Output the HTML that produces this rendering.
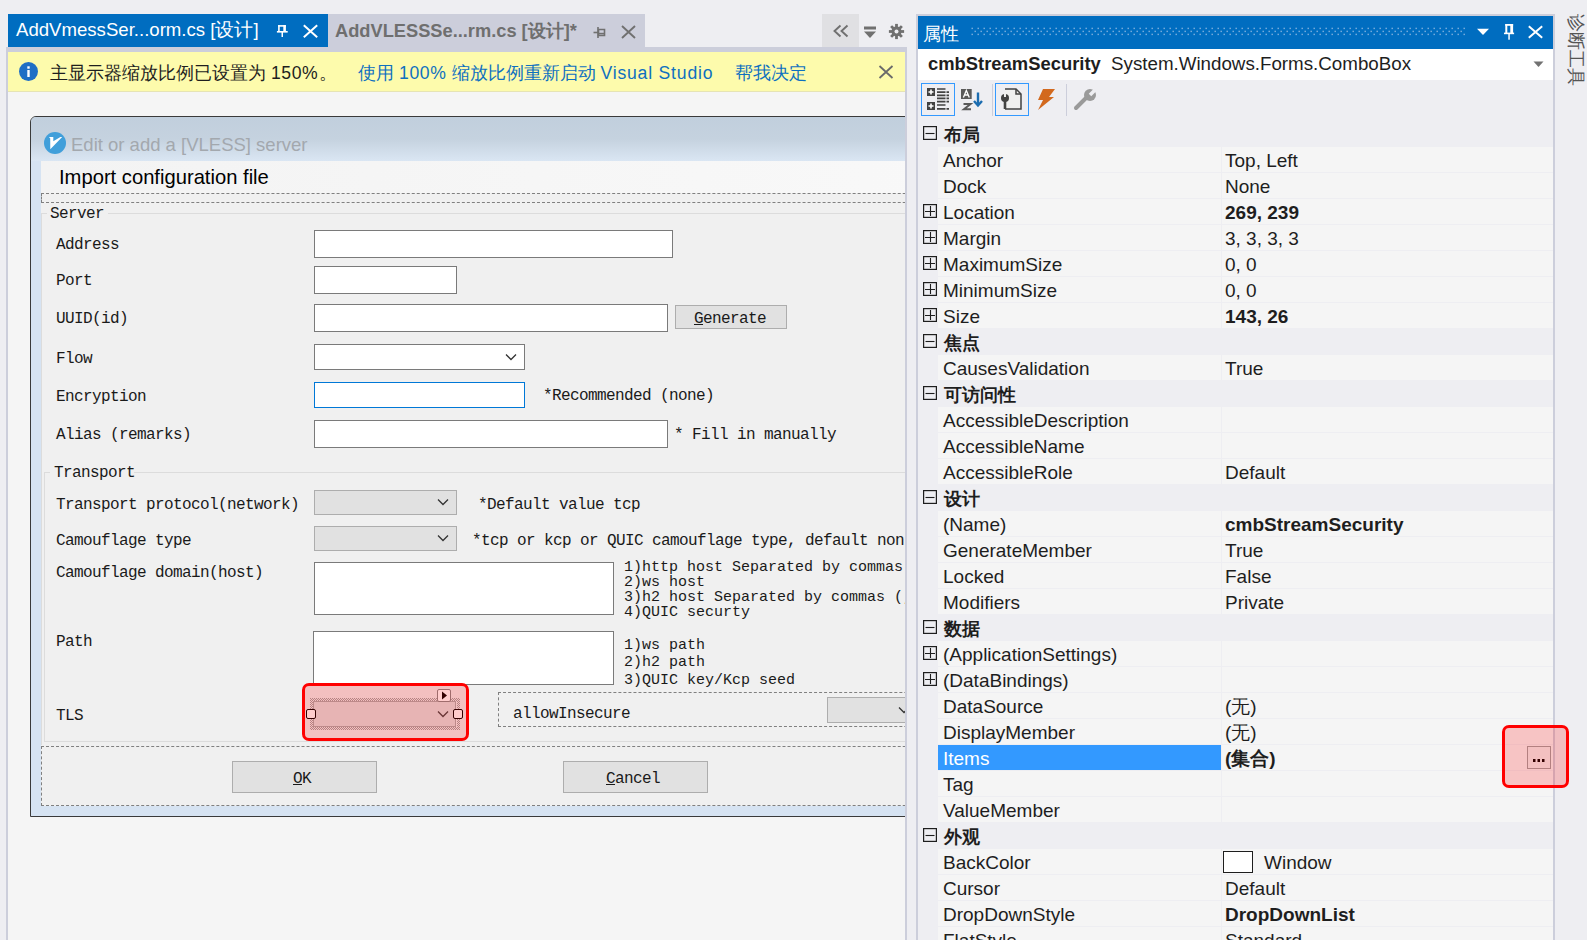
<!DOCTYPE html>
<html><head><meta charset="utf-8"><style>
html,body{margin:0;padding:0}
body{width:1587px;height:940px;overflow:hidden;position:relative;background:#EEEEF2;font-family:'Liberation Sans', sans-serif}
</style></head><body>
<div style="position:absolute;left:8px;top:14px;width:320px;height:33px;background:#006DC0"></div>
<div style="position:absolute;left:16px;top:21.26px;font-family:'Liberation Sans', sans-serif;font-size:18.6px;line-height:18.6px;color:#fff;font-weight:normal;white-space:nowrap;">AddVmessSer...orm.cs [设计]</div>
<svg style="position:absolute;left:276px;top:24px;" width="14" height="15" viewBox="0 0 14 15"><g fill="#fff"><rect x="2.1" y="1.1" width="1.6" height="6.5"/><rect x="7.3" y="1.1" width="2.6" height="6.5"/><rect x="2.1" y="1.1" width="7.8" height="1.6"/><rect x="0.9" y="7" width="10.8" height="1.6"/><rect x="5.5" y="8" width="1.5" height="5"/></g></svg>
<svg style="position:absolute;left:302px;top:24px;" width="17" height="15" viewBox="0 0 17 15"><path d="M1.8 1.3L15.2 13.3M15.2 1.3L1.8 13.3" stroke="#fff" stroke-width="2"/></svg>
<div style="position:absolute;left:328px;top:14px;width:317px;height:33px;background:#CCCEDB"></div>
<div style="position:absolute;left:335px;top:21.55px;font-family:'Liberation Sans', sans-serif;font-size:18.25px;line-height:18.25px;color:#6F6F6F;font-weight:bold;white-space:nowrap;">AddVLESSSe...rm.cs [设计]*</div>
<svg style="position:absolute;left:593px;top:26px;" width="14" height="13" viewBox="0 0 14 13"><path d="M5.5 3.5h6v6h-6z" fill="none" stroke="#707070" stroke-width="1.6"/><path d="M5.5 7.6h6" stroke="#707070" stroke-width="1.6"/><path d="M5 1v11" stroke="#707070" stroke-width="1.6"/><path d="M0.5 6.5h5" stroke="#707070" stroke-width="1.6"/></svg>
<svg style="position:absolute;left:620px;top:25px;" width="17" height="14" viewBox="0 0 17 14"><path d="M2 1L15 13M15 1L2 13" stroke="#707070" stroke-width="1.9"/></svg>
<div style="position:absolute;left:6px;top:47px;width:901px;height:5px;background:#CCCEDB"></div>
<div style="position:absolute;left:822px;top:14px;width:37px;height:33px;background:#E0E0E3"></div>
<svg style="position:absolute;left:832px;top:24px;" width="18" height="14" viewBox="0 0 18 14"><path d="M8.5 1.5L2.5 7l6 5.5M15.5 1.5L9.5 7l6 5.5" fill="none" stroke="#707070" stroke-width="1.9"/></svg>
<svg style="position:absolute;left:863px;top:25px;" width="14" height="14" viewBox="0 0 14 14"><path d="M1 1.5h12v3H1z" fill="#707070"/><path d="M1 6.5h12L7 13z" fill="#707070"/></svg>
<svg style="position:absolute;left:888px;top:23px;" width="17" height="17" viewBox="0 0 17 17"><g transform="translate(8.5 8.5)"><circle r="5" fill="#707070"/><circle r="2" fill="#EEEEF2"/><rect x="-1.4" y="-7.6" width="2.8" height="4" fill="#707070" transform="rotate(0)"/><rect x="-1.4" y="-7.6" width="2.8" height="4" fill="#707070" transform="rotate(45)"/><rect x="-1.4" y="-7.6" width="2.8" height="4" fill="#707070" transform="rotate(90)"/><rect x="-1.4" y="-7.6" width="2.8" height="4" fill="#707070" transform="rotate(135)"/><rect x="-1.4" y="-7.6" width="2.8" height="4" fill="#707070" transform="rotate(180)"/><rect x="-1.4" y="-7.6" width="2.8" height="4" fill="#707070" transform="rotate(225)"/><rect x="-1.4" y="-7.6" width="2.8" height="4" fill="#707070" transform="rotate(270)"/><rect x="-1.4" y="-7.6" width="2.8" height="4" fill="#707070" transform="rotate(315)"/></g></svg>
<div style="position:absolute;left:6px;top:52px;width:2px;height:888px;background:#CCCEDB"></div>
<div style="position:absolute;left:905px;top:47px;width:2px;height:893px;background:#CCCEDB"></div>
<div style="position:absolute;left:8px;top:92px;width:897px;height:848px;background:#F5F5F5"></div>
<div style="position:absolute;left:8px;top:52px;width:897px;height:40px;background:#FDFBAC"></div>
<div style="position:absolute;left:8px;top:91px;width:897px;height:1px;background:#E6E4B4"></div>
<svg style="position:absolute;left:19px;top:62px;" width="19" height="19" viewBox="0 0 19 19"><circle cx="9.5" cy="9.5" r="9.5" fill="#1F6FC5"/><rect x="8.3" y="8" width="2.4" height="7" fill="#fff"/><rect x="8.3" y="4.3" width="2.4" height="2.4" fill="#fff"/></svg>
<div style="position:absolute;left:50px;top:65.10px;font-family:'Liberation Sans', sans-serif;font-size:17.6px;line-height:17.6px;color:#1E1E1E;font-weight:normal;white-space:nowrap;">主显示器缩放比例已设置为 <span style='letter-spacing:0.6px'>150%</span><span style='margin-left:1px'>。</span></div>
<div style="position:absolute;left:358px;top:65.10px;font-family:'Liberation Sans', sans-serif;font-size:17.6px;line-height:17.6px;color:#0E70C0;font-weight:normal;white-space:nowrap;">使用 <span style='letter-spacing:0.7px'>100%</span> 缩放比例重新启动 <span style='letter-spacing:0.8px'>Visual Studio</span></div>
<div style="position:absolute;left:735px;top:65.10px;font-family:'Liberation Sans', sans-serif;font-size:17.6px;line-height:17.6px;color:#0E70C0;font-weight:normal;white-space:nowrap;">帮我决定</div>
<svg style="position:absolute;left:878px;top:65px;" width="16" height="14" viewBox="0 0 16 14"><path d="M1.5 1L14.5 13M14.5 1L1.5 13" stroke="#6A6A6A" stroke-width="1.8"/></svg>
<div style="position:absolute;left:8px;top:92px;width:897px;height:848px;overflow:hidden">
<div style="position:absolute;left:22px;top:24px;width:1000px;height:701px;background:#D6E3F2;border:1px solid #3A3A3A;border-top-left-radius:6px;box-sizing:border-box"></div>
<div style="position:absolute;left:23px;top:25px;width:998px;height:44px;background:linear-gradient(#C1CFDD 0%,#C5D2DF 50%,#DAE6F3 100%);border-top-left-radius:5px"></div>
<svg style="position:absolute;left:36px;top:40px;" width="22" height="22" viewBox="0 0 22 22"><circle cx="11" cy="11" r="11" fill="#419FDA"/><path d="M4.9 5.1L9.3 5.1L9.3 9.2L16.4 5.1L18.2 5.1L6.3 17.2L6.2 6.3Z" fill="#fff"/></svg>
<div style="position:absolute;left:63px;top:44.34px;font-family:'Liberation Sans', sans-serif;font-size:18.5px;line-height:18.5px;color:#A3A8AE;font-weight:normal;white-space:nowrap;">Edit or add a [VLESS] server</div>
<div style="position:absolute;left:33px;top:69px;width:990px;height:645px;background:#F0F0F0"></div>
<div style="position:absolute;left:33px;top:69px;width:990px;height:32px;background:linear-gradient(90deg,#F3F3F3,#F9F9F9)"></div>
<div style="position:absolute;left:51px;top:75.30px;font-family:'Liberation Sans', sans-serif;font-size:20.2px;line-height:20.2px;color:#000;font-weight:normal;white-space:nowrap;">Import configuration file</div>
<div style="position:absolute;left:33px;top:101px;width:990px;height:10px;border:1px dashed #808080;box-sizing:border-box"></div>
<div style="position:absolute;left:33px;top:121px;width:990px;height:1px;background:#DCDCDC"></div>
<div style="position:absolute;left:33px;top:121px;width:1px;height:532px;background:#DCDCDC"></div>
<div style="position:absolute;left:39px;top:113px;width:61px;height:16px;background:#F0F0F0"></div>
<div style="position:absolute;left:42px;top:113.74px;font-family:'Liberation Mono', monospace;font-size:16px;line-height:16px;color:#1a1a1a;font-weight:normal;white-space:nowrap;letter-spacing:-0.6px">Server</div>
<div style="position:absolute;left:48px;top:144.74px;font-family:'Liberation Mono', monospace;font-size:16px;line-height:16px;color:#1a1a1a;font-weight:normal;white-space:nowrap;letter-spacing:-0.6px">Address</div>
<div style="position:absolute;left:306px;top:138px;width:359px;height:28px;background:#fff;border:1px solid #7A7A7A;box-sizing:border-box"></div>
<div style="position:absolute;left:48px;top:180.74px;font-family:'Liberation Mono', monospace;font-size:16px;line-height:16px;color:#1a1a1a;font-weight:normal;white-space:nowrap;letter-spacing:-0.6px">Port</div>
<div style="position:absolute;left:306px;top:174px;width:143px;height:28px;background:#fff;border:1px solid #7A7A7A;box-sizing:border-box"></div>
<div style="position:absolute;left:48px;top:218.74px;font-family:'Liberation Mono', monospace;font-size:16px;line-height:16px;color:#1a1a1a;font-weight:normal;white-space:nowrap;letter-spacing:-0.6px">UUID(id)</div>
<div style="position:absolute;left:306px;top:212px;width:354px;height:28px;background:#fff;border:1px solid #7A7A7A;box-sizing:border-box"></div>
<div style="position:absolute;left:667px;top:213px;width:112px;height:24px;background:#E1E1E1;border:1px solid #ADADAD;box-sizing:border-box"></div>
<div style="position:absolute;left:686px;top:218.74px;font-family:'Liberation Mono', monospace;font-size:16px;line-height:16px;color:#1a1a1a;font-weight:normal;white-space:nowrap;letter-spacing:-0.6px"><u>G</u>enerate</div>
<div style="position:absolute;left:48px;top:258.74px;font-family:'Liberation Mono', monospace;font-size:16px;line-height:16px;color:#1a1a1a;font-weight:normal;white-space:nowrap;letter-spacing:-0.6px">Flow</div>
<div style="position:absolute;left:306px;top:252px;width:211px;height:26px;background:#fff;border:1px solid #7A7A7A;box-sizing:border-box"></div>
<svg style="position:absolute;left:497px;top:261px;" width="12" height="8" viewBox="0 0 12 8"><path d="M1 1.5l5 5 5-5" fill="none" stroke="#333" stroke-width="1.3"/></svg>
<div style="position:absolute;left:48px;top:296.74px;font-family:'Liberation Mono', monospace;font-size:16px;line-height:16px;color:#1a1a1a;font-weight:normal;white-space:nowrap;letter-spacing:-0.6px">Encryption</div>
<div style="position:absolute;left:306px;top:290px;width:211px;height:26px;background:#fff;border:1px solid #0078D7;box-sizing:border-box"></div>
<div style="position:absolute;left:535px;top:295.74px;font-family:'Liberation Mono', monospace;font-size:16px;line-height:16px;color:#1a1a1a;font-weight:normal;white-space:nowrap;letter-spacing:-0.6px">*Recommended (none)</div>
<div style="position:absolute;left:48px;top:334.74px;font-family:'Liberation Mono', monospace;font-size:16px;line-height:16px;color:#1a1a1a;font-weight:normal;white-space:nowrap;letter-spacing:-0.6px">Alias (remarks)</div>
<div style="position:absolute;left:306px;top:328px;width:354px;height:28px;background:#fff;border:1px solid #7A7A7A;box-sizing:border-box"></div>
<div style="position:absolute;left:666px;top:334.74px;font-family:'Liberation Mono', monospace;font-size:16px;line-height:16px;color:#1a1a1a;font-weight:normal;white-space:nowrap;letter-spacing:-0.6px">* Fill in manually</div>
<div style="position:absolute;left:36px;top:380px;width:990px;height:1px;background:#DCDCDC"></div>
<div style="position:absolute;left:36px;top:380px;width:1px;height:270px;background:#DCDCDC"></div>
<div style="position:absolute;left:36px;top:649px;width:990px;height:1px;background:#DCDCDC"></div>
<div style="position:absolute;left:42px;top:372px;width:84px;height:16px;background:#F0F0F0"></div>
<div style="position:absolute;left:46px;top:372.74px;font-family:'Liberation Mono', monospace;font-size:16px;line-height:16px;color:#1a1a1a;font-weight:normal;white-space:nowrap;letter-spacing:-0.6px">Transport</div>
<div style="position:absolute;left:48px;top:404.74px;font-family:'Liberation Mono', monospace;font-size:16px;line-height:16px;color:#1a1a1a;font-weight:normal;white-space:nowrap;letter-spacing:-0.6px">Transport protocol(network)</div>
<div style="position:absolute;left:306px;top:398px;width:143px;height:25px;background:#E1E1E1;border:1px solid #ADADAD;box-sizing:border-box"></div>
<svg style="position:absolute;left:429px;top:406px;" width="12" height="8" viewBox="0 0 12 8"><path d="M1 1.5l5 5 5-5" fill="none" stroke="#333" stroke-width="1.3"/></svg>
<div style="position:absolute;left:470px;top:404.74px;font-family:'Liberation Mono', monospace;font-size:16px;line-height:16px;color:#1a1a1a;font-weight:normal;white-space:nowrap;letter-spacing:-0.6px">*Default value tcp</div>
<div style="position:absolute;left:48px;top:440.74px;font-family:'Liberation Mono', monospace;font-size:16px;line-height:16px;color:#1a1a1a;font-weight:normal;white-space:nowrap;letter-spacing:-0.6px">Camouflage type</div>
<div style="position:absolute;left:306px;top:434px;width:143px;height:25px;background:#E1E1E1;border:1px solid #ADADAD;box-sizing:border-box"></div>
<svg style="position:absolute;left:429px;top:442px;" width="12" height="8" viewBox="0 0 12 8"><path d="M1 1.5l5 5 5-5" fill="none" stroke="#333" stroke-width="1.3"/></svg>
<div style="position:absolute;left:464px;top:440.74px;font-family:'Liberation Mono', monospace;font-size:16px;line-height:16px;color:#1a1a1a;font-weight:normal;white-space:nowrap;letter-spacing:-0.6px">*tcp or kcp or QUIC camouflage type, default non</div>
<div style="position:absolute;left:48px;top:472.74px;font-family:'Liberation Mono', monospace;font-size:16px;line-height:16px;color:#1a1a1a;font-weight:normal;white-space:nowrap;letter-spacing:-0.6px">Camouflage domain(host)</div>
<div style="position:absolute;left:306px;top:470px;width:300px;height:53px;background:#fff;border:1px solid #7A7A7A;box-sizing:border-box"></div>
<div style="position:absolute;left:616px;top:467.50px;font-family:'Liberation Mono', monospace;font-size:15px;line-height:15px;color:#1a1a1a;font-weight:normal;white-space:nowrap;letter-spacing:0px">1)http host Separated by commas (,)</div>
<div style="position:absolute;left:616px;top:482.50px;font-family:'Liberation Mono', monospace;font-size:15px;line-height:15px;color:#1a1a1a;font-weight:normal;white-space:nowrap;letter-spacing:0px">2)ws host</div>
<div style="position:absolute;left:616px;top:497.50px;font-family:'Liberation Mono', monospace;font-size:15px;line-height:15px;color:#1a1a1a;font-weight:normal;white-space:nowrap;letter-spacing:0px">3)h2 host Separated by commas (,)</div>
<div style="position:absolute;left:616px;top:512.50px;font-family:'Liberation Mono', monospace;font-size:15px;line-height:15px;color:#1a1a1a;font-weight:normal;white-space:nowrap;letter-spacing:0px">4)QUIC securty</div>
<div style="position:absolute;left:48px;top:541.74px;font-family:'Liberation Mono', monospace;font-size:16px;line-height:16px;color:#1a1a1a;font-weight:normal;white-space:nowrap;letter-spacing:-0.6px">Path</div>
<div style="position:absolute;left:305px;top:539px;width:301px;height:54px;background:#fff;border:1px solid #7A7A7A;box-sizing:border-box"></div>
<div style="position:absolute;left:616px;top:545.50px;font-family:'Liberation Mono', monospace;font-size:15px;line-height:15px;color:#1a1a1a;font-weight:normal;white-space:nowrap;letter-spacing:0px">1)ws path</div>
<div style="position:absolute;left:616px;top:562.50px;font-family:'Liberation Mono', monospace;font-size:15px;line-height:15px;color:#1a1a1a;font-weight:normal;white-space:nowrap;letter-spacing:0px">2)h2 path</div>
<div style="position:absolute;left:616px;top:580.50px;font-family:'Liberation Mono', monospace;font-size:15px;line-height:15px;color:#1a1a1a;font-weight:normal;white-space:nowrap;letter-spacing:0px">3)QUIC key/Kcp seed</div>
<div style="position:absolute;left:48px;top:615.74px;font-family:'Liberation Mono', monospace;font-size:16px;line-height:16px;color:#1a1a1a;font-weight:normal;white-space:nowrap;letter-spacing:-0.6px">TLS</div>
<div style="position:absolute;left:305px;top:609px;width:143px;height:26px;background:#E1E1E1;border:1px solid #ADADAD;box-sizing:border-box"></div>
<svg style="position:absolute;left:302px;top:606px;" width="150" height="32" viewBox="0 0 150 32"><defs><pattern id="hp" width="2" height="2" patternUnits="userSpaceOnUse"><rect x="0" y="0" width="1" height="1" fill="#555"/><rect x="1" y="1" width="1" height="1" fill="#555"/></pattern></defs><path d="M0 0h150v32H0z M3 3v26h144V3z" fill="url(#hp)" fill-rule="evenodd" opacity="0.5"/></svg>
<svg style="position:absolute;left:429px;top:618px;" width="12" height="8" viewBox="0 0 12 8"><path d="M1 1.5l5 5 5-5" fill="none" stroke="#444" stroke-width="1.3"/></svg>
<div style="position:absolute;left:298px;top:617px;width:10px;height:10px;background:#fff;border:1px solid #000;box-sizing:border-box;border-radius:2px"></div>
<div style="position:absolute;left:445px;top:617px;width:10px;height:10px;background:#fff;border:1px solid #000;box-sizing:border-box;border-radius:2px"></div>
<div style="position:absolute;left:429px;top:597px;width:14px;height:13px;background:#fff;border:1px solid #888;box-sizing:border-box;border-radius:2px"></div>
<svg style="position:absolute;left:432px;top:599px;" width="8" height="9" viewBox="0 0 8 9"><path d="M2 0.5l5 4-5 4z" fill="#000"/></svg>
<div style="position:absolute;left:294px;top:591px;width:167px;height:58px;border:3px solid #FF0000;border-radius:7px;background:rgba(255,0,0,0.2);box-sizing:border-box"></div>
<div style="position:absolute;left:490px;top:600px;width:600px;height:35px;border:1px dashed #808080;box-sizing:border-box"></div>
<div style="position:absolute;left:505px;top:613.74px;font-family:'Liberation Mono', monospace;font-size:16px;line-height:16px;color:#1a1a1a;font-weight:normal;white-space:nowrap;letter-spacing:-0.6px">allowInsecure</div>
<div style="position:absolute;left:819px;top:605px;width:143px;height:26px;background:#E1E1E1;border:1px solid #ADADAD;box-sizing:border-box"></div>
<svg style="position:absolute;left:890px;top:614px;" width="12" height="8" viewBox="0 0 12 8"><path d="M1 1.5l5 5 5-5" fill="none" stroke="#333" stroke-width="1.3"/></svg>
<div style="position:absolute;left:33px;top:654px;width:990px;height:60px;border:1px dashed #808080;box-sizing:border-box"></div>
<div style="position:absolute;left:224px;top:669px;width:145px;height:32px;background:#E1E1E1;border:1px solid #ADADAD;box-sizing:border-box"></div>
<div style="position:absolute;left:285px;top:678.74px;font-family:'Liberation Mono', monospace;font-size:16px;line-height:16px;color:#1a1a1a;font-weight:normal;white-space:nowrap;letter-spacing:-0.6px"><u>O</u>K</div>
<div style="position:absolute;left:555px;top:669px;width:145px;height:32px;background:#E1E1E1;border:1px solid #ADADAD;box-sizing:border-box"></div>
<div style="position:absolute;left:598px;top:678.74px;font-family:'Liberation Mono', monospace;font-size:16px;line-height:16px;color:#1a1a1a;font-weight:normal;white-space:nowrap;letter-spacing:-0.6px"><u>C</u>ancel</div>
</div>
<div style="position:absolute;left:916px;top:14px;width:639px;height:926px;background:#EEEEF2;border-left:2px solid #CCCEDB;border-right:2px solid #CCCEDB;border-top:2px solid #CCCEDB;box-sizing:border-box"></div>
<div style="position:absolute;left:918px;top:16px;width:635px;height:33px;background:#006DC0"></div>
<div style="position:absolute;left:923px;top:24.76px;font-family:'Liberation Sans', sans-serif;font-size:18px;line-height:18px;color:#fff;font-weight:normal;white-space:nowrap;">属性</div>
<svg style="position:absolute;left:971px;top:27px;" width="495" height="9" viewBox="0 0 495 9"><defs><pattern id="gp" width="6" height="6" patternUnits="userSpaceOnUse"><rect x="0.5" y="0.7" width="1.4" height="1.4" fill="#7FB0DE"/><rect x="3.5" y="3.7" width="1.4" height="1.4" fill="#7FB0DE"/></pattern></defs><rect width="495" height="9" fill="url(#gp)"/></svg>
<svg style="position:absolute;left:1476px;top:28px;" width="14" height="8" viewBox="0 0 14 8"><path d="M1 0.8h12L7 7z" fill="#fff"/></svg>
<svg style="position:absolute;left:1503px;top:23px;" width="13" height="18" viewBox="0 0 13 18"><g fill="#fff"><rect x="2.3" y="1" width="2" height="9"/><rect x="7.3" y="1" width="2.8" height="9"/><rect x="2.3" y="1" width="7.8" height="1.8"/><rect x="1" y="9.6" width="10.1" height="1.6"/><rect x="5.3" y="10.5" width="1.5" height="6.2"/></g></svg>
<svg style="position:absolute;left:1527px;top:25px;" width="17" height="14" viewBox="0 0 17 14"><path d="M1.8 1.2L15.2 12.8M15.2 1.2L1.8 12.8" stroke="#fff" stroke-width="2"/></svg>
<div style="position:absolute;left:918px;top:49px;width:635px;height:31px;background:#fff"></div>
<div style="position:absolute;left:928px;top:55.42px;font-family:'Liberation Sans', sans-serif;font-size:18.4px;line-height:18.4px;color:#1E1E1E;font-weight:bold;white-space:nowrap;">cmbStreamSecurity</div>
<div style="position:absolute;left:1111px;top:55.13px;font-family:'Liberation Sans', sans-serif;font-size:18.75px;line-height:18.75px;color:#1E1E1E;font-weight:normal;white-space:nowrap;">System.Windows.Forms.ComboBox</div>
<svg style="position:absolute;left:1533px;top:61px;" width="11" height="7" viewBox="0 0 11 7"><path d="M0.5 0.5h10L5.5 6z" fill="#717171"/></svg>
<div style="position:absolute;left:921px;top:83px;width:34px;height:33px;border:1px solid #3399FF;box-sizing:border-box"></div>
<svg style="position:absolute;left:927px;top:88px;" width="23" height="23" viewBox="0 0 23 23"><rect x="0" y="0" width="8" height="8" fill="#424242"/><path d="M1.5 4h5M4 1.5v5" stroke="#fff" stroke-width="1.6"/><rect x="0" y="14" width="8" height="8" fill="#424242"/><path d="M1.5 18h5M4 15.5v5" stroke="#fff" stroke-width="1.6"/><path d="M10 1h8.5M10 4.1h8.5M10 7.3h8.5M10 10.4h8.5M10 13.6h8.5M10 17h8.5M10 20.8h8.5" stroke="#424242" stroke-width="1.7"/><path d="M19.5 4.1h2.5M19.5 7.3h2.5M19.5 10.4h2.5M19.5 13.6h2.5M19.5 20.8h2.5" stroke="#424242" stroke-width="1.7"/></svg>
<svg style="position:absolute;left:960px;top:88px;" width="24" height="24" viewBox="0 0 24 24"><rect x="1" y="1" width="10.7" height="10" fill="#5A5A5A"/><path d="M3.4 9.5L6.35 2.5 9.3 9.5M4.5 7h3.7" fill="none" stroke="#fff" stroke-width="1.3"/><path d="M3.5 16h7L4 21.2h7" fill="none" stroke="#5A5A5A" stroke-width="2"/><path d="M18 4.5v12" stroke="#1B6CB0" stroke-width="2.4"/><path d="M14 13l4 4.5 4-4.5" fill="none" stroke="#1B6CB0" stroke-width="2.4"/></svg>
<div style="position:absolute;left:992px;top:84px;width:1px;height:32px;background:#CCCEDB"></div>
<div style="position:absolute;left:995px;top:83px;width:34px;height:33px;border:1px solid #3399FF;box-sizing:border-box"></div>
<svg style="position:absolute;left:1000px;top:87px;" width="23" height="25" viewBox="0 0 23 25"><path d="M5 2h11l5 5v15H5" fill="#EFEFEF" stroke="#424242" stroke-width="1.5"/><path d="M16 2v5h5" fill="none" stroke="#424242" stroke-width="1.5"/><circle cx="5" cy="11" r="4" fill="#424242"/><rect x="3.7" y="12" width="2.6" height="10" fill="#424242"/><rect x="4" y="6" width="2" height="4" fill="#EFEFEF"/></svg>
<svg style="position:absolute;left:1035px;top:88px;" width="22" height="23" viewBox="0 0 22 23"><path d="M8 1h12l-6 8h5L3 22l5-10H3z" fill="#D2691E"/></svg>
<div style="position:absolute;left:1066px;top:84px;width:1px;height:32px;background:#CCCEDB"></div>
<svg style="position:absolute;left:1073px;top:87px;" width="25" height="25" viewBox="0 0 25 25"><path d="M3 21L13 11" stroke="#9A9A9A" stroke-width="4" stroke-linecap="round"/><circle cx="17" cy="8" r="6" fill="#9A9A9A"/><path d="M17 8l5-5" stroke="#EEEEF2" stroke-width="3.5"/></svg>
<div style="position:absolute;left:0;top:0;width:1553px;height:940px;overflow:hidden">
<svg style="position:absolute;left:923px;top:126px;" width="14" height="14" viewBox="0 0 14 14"><rect x="0.6" y="0.6" width="12.8" height="12.8" fill="none" stroke="#1E1E1E" stroke-width="1.2"/><path d="M2.5 7.5h9" stroke="#1E1E1E" stroke-width="1.1"/></svg>
<div style="position:absolute;left:944px;top:125.76px;font-family:'Liberation Sans', sans-serif;font-size:18px;line-height:18px;color:#1E1E1E;font-weight:bold;white-space:nowrap;">布局</div>
<div style="position:absolute;left:938px;top:147px;width:283px;height:25px;background:#F5F5F5"></div>
<div style="position:absolute;left:1222px;top:147px;width:331px;height:25px;background:#F5F5F5"></div>
<div style="position:absolute;left:943px;top:150.92px;font-family:'Liberation Sans', sans-serif;font-size:19px;line-height:19px;color:#1E1E1E;font-weight:normal;white-space:nowrap;">Anchor</div>
<div style="position:absolute;left:1225px;top:150.92px;font-family:'Liberation Sans', sans-serif;font-size:19px;line-height:19px;color:#1E1E1E;font-weight:normal;white-space:nowrap;">Top, Left</div>
<div style="position:absolute;left:938px;top:173px;width:283px;height:25px;background:#F5F5F5"></div>
<div style="position:absolute;left:1222px;top:173px;width:331px;height:25px;background:#F5F5F5"></div>
<div style="position:absolute;left:943px;top:176.92px;font-family:'Liberation Sans', sans-serif;font-size:19px;line-height:19px;color:#1E1E1E;font-weight:normal;white-space:nowrap;">Dock</div>
<div style="position:absolute;left:1225px;top:176.92px;font-family:'Liberation Sans', sans-serif;font-size:19px;line-height:19px;color:#1E1E1E;font-weight:normal;white-space:nowrap;">None</div>
<div style="position:absolute;left:938px;top:199px;width:283px;height:25px;background:#F5F5F5"></div>
<div style="position:absolute;left:1222px;top:199px;width:331px;height:25px;background:#F5F5F5"></div>
<svg style="position:absolute;left:923px;top:204px;" width="14" height="14" viewBox="0 0 14 14"><rect x="0.6" y="0.6" width="12.8" height="12.8" fill="none" stroke="#1E1E1E" stroke-width="1.2"/><path d="M2 7.5h10M7.5 2v10" stroke="#1E1E1E" stroke-width="1.1"/></svg>
<div style="position:absolute;left:943px;top:202.92px;font-family:'Liberation Sans', sans-serif;font-size:19px;line-height:19px;color:#1E1E1E;font-weight:normal;white-space:nowrap;">Location</div>
<div style="position:absolute;left:1225px;top:202.92px;font-family:'Liberation Sans', sans-serif;font-size:19px;line-height:19px;color:#1E1E1E;font-weight:bold;white-space:nowrap;">269, 239</div>
<div style="position:absolute;left:938px;top:225px;width:283px;height:25px;background:#F5F5F5"></div>
<div style="position:absolute;left:1222px;top:225px;width:331px;height:25px;background:#F5F5F5"></div>
<svg style="position:absolute;left:923px;top:230px;" width="14" height="14" viewBox="0 0 14 14"><rect x="0.6" y="0.6" width="12.8" height="12.8" fill="none" stroke="#1E1E1E" stroke-width="1.2"/><path d="M2 7.5h10M7.5 2v10" stroke="#1E1E1E" stroke-width="1.1"/></svg>
<div style="position:absolute;left:943px;top:228.92px;font-family:'Liberation Sans', sans-serif;font-size:19px;line-height:19px;color:#1E1E1E;font-weight:normal;white-space:nowrap;">Margin</div>
<div style="position:absolute;left:1225px;top:228.92px;font-family:'Liberation Sans', sans-serif;font-size:19px;line-height:19px;color:#1E1E1E;font-weight:normal;white-space:nowrap;">3, 3, 3, 3</div>
<div style="position:absolute;left:938px;top:251px;width:283px;height:25px;background:#F5F5F5"></div>
<div style="position:absolute;left:1222px;top:251px;width:331px;height:25px;background:#F5F5F5"></div>
<svg style="position:absolute;left:923px;top:256px;" width="14" height="14" viewBox="0 0 14 14"><rect x="0.6" y="0.6" width="12.8" height="12.8" fill="none" stroke="#1E1E1E" stroke-width="1.2"/><path d="M2 7.5h10M7.5 2v10" stroke="#1E1E1E" stroke-width="1.1"/></svg>
<div style="position:absolute;left:943px;top:254.92px;font-family:'Liberation Sans', sans-serif;font-size:19px;line-height:19px;color:#1E1E1E;font-weight:normal;white-space:nowrap;">MaximumSize</div>
<div style="position:absolute;left:1225px;top:254.92px;font-family:'Liberation Sans', sans-serif;font-size:19px;line-height:19px;color:#1E1E1E;font-weight:normal;white-space:nowrap;">0, 0</div>
<div style="position:absolute;left:938px;top:277px;width:283px;height:25px;background:#F5F5F5"></div>
<div style="position:absolute;left:1222px;top:277px;width:331px;height:25px;background:#F5F5F5"></div>
<svg style="position:absolute;left:923px;top:282px;" width="14" height="14" viewBox="0 0 14 14"><rect x="0.6" y="0.6" width="12.8" height="12.8" fill="none" stroke="#1E1E1E" stroke-width="1.2"/><path d="M2 7.5h10M7.5 2v10" stroke="#1E1E1E" stroke-width="1.1"/></svg>
<div style="position:absolute;left:943px;top:280.92px;font-family:'Liberation Sans', sans-serif;font-size:19px;line-height:19px;color:#1E1E1E;font-weight:normal;white-space:nowrap;">MinimumSize</div>
<div style="position:absolute;left:1225px;top:280.92px;font-family:'Liberation Sans', sans-serif;font-size:19px;line-height:19px;color:#1E1E1E;font-weight:normal;white-space:nowrap;">0, 0</div>
<div style="position:absolute;left:938px;top:303px;width:283px;height:25px;background:#F5F5F5"></div>
<div style="position:absolute;left:1222px;top:303px;width:331px;height:25px;background:#F5F5F5"></div>
<svg style="position:absolute;left:923px;top:308px;" width="14" height="14" viewBox="0 0 14 14"><rect x="0.6" y="0.6" width="12.8" height="12.8" fill="none" stroke="#1E1E1E" stroke-width="1.2"/><path d="M2 7.5h10M7.5 2v10" stroke="#1E1E1E" stroke-width="1.1"/></svg>
<div style="position:absolute;left:943px;top:306.92px;font-family:'Liberation Sans', sans-serif;font-size:19px;line-height:19px;color:#1E1E1E;font-weight:normal;white-space:nowrap;">Size</div>
<div style="position:absolute;left:1225px;top:306.92px;font-family:'Liberation Sans', sans-serif;font-size:19px;line-height:19px;color:#1E1E1E;font-weight:bold;white-space:nowrap;">143, 26</div>
<svg style="position:absolute;left:923px;top:334px;" width="14" height="14" viewBox="0 0 14 14"><rect x="0.6" y="0.6" width="12.8" height="12.8" fill="none" stroke="#1E1E1E" stroke-width="1.2"/><path d="M2.5 7.5h9" stroke="#1E1E1E" stroke-width="1.1"/></svg>
<div style="position:absolute;left:944px;top:333.76px;font-family:'Liberation Sans', sans-serif;font-size:18px;line-height:18px;color:#1E1E1E;font-weight:bold;white-space:nowrap;">焦点</div>
<div style="position:absolute;left:938px;top:355px;width:283px;height:25px;background:#F5F5F5"></div>
<div style="position:absolute;left:1222px;top:355px;width:331px;height:25px;background:#F5F5F5"></div>
<div style="position:absolute;left:943px;top:358.92px;font-family:'Liberation Sans', sans-serif;font-size:19px;line-height:19px;color:#1E1E1E;font-weight:normal;white-space:nowrap;">CausesValidation</div>
<div style="position:absolute;left:1225px;top:358.92px;font-family:'Liberation Sans', sans-serif;font-size:19px;line-height:19px;color:#1E1E1E;font-weight:normal;white-space:nowrap;">True</div>
<svg style="position:absolute;left:923px;top:386px;" width="14" height="14" viewBox="0 0 14 14"><rect x="0.6" y="0.6" width="12.8" height="12.8" fill="none" stroke="#1E1E1E" stroke-width="1.2"/><path d="M2.5 7.5h9" stroke="#1E1E1E" stroke-width="1.1"/></svg>
<div style="position:absolute;left:944px;top:385.76px;font-family:'Liberation Sans', sans-serif;font-size:18px;line-height:18px;color:#1E1E1E;font-weight:bold;white-space:nowrap;">可访问性</div>
<div style="position:absolute;left:938px;top:407px;width:283px;height:25px;background:#F5F5F5"></div>
<div style="position:absolute;left:1222px;top:407px;width:331px;height:25px;background:#F5F5F5"></div>
<div style="position:absolute;left:943px;top:410.92px;font-family:'Liberation Sans', sans-serif;font-size:19px;line-height:19px;color:#1E1E1E;font-weight:normal;white-space:nowrap;">AccessibleDescription</div>
<div style="position:absolute;left:938px;top:433px;width:283px;height:25px;background:#F5F5F5"></div>
<div style="position:absolute;left:1222px;top:433px;width:331px;height:25px;background:#F5F5F5"></div>
<div style="position:absolute;left:943px;top:436.92px;font-family:'Liberation Sans', sans-serif;font-size:19px;line-height:19px;color:#1E1E1E;font-weight:normal;white-space:nowrap;">AccessibleName</div>
<div style="position:absolute;left:938px;top:459px;width:283px;height:25px;background:#F5F5F5"></div>
<div style="position:absolute;left:1222px;top:459px;width:331px;height:25px;background:#F5F5F5"></div>
<div style="position:absolute;left:943px;top:462.92px;font-family:'Liberation Sans', sans-serif;font-size:19px;line-height:19px;color:#1E1E1E;font-weight:normal;white-space:nowrap;">AccessibleRole</div>
<div style="position:absolute;left:1225px;top:462.92px;font-family:'Liberation Sans', sans-serif;font-size:19px;line-height:19px;color:#1E1E1E;font-weight:normal;white-space:nowrap;">Default</div>
<svg style="position:absolute;left:923px;top:490px;" width="14" height="14" viewBox="0 0 14 14"><rect x="0.6" y="0.6" width="12.8" height="12.8" fill="none" stroke="#1E1E1E" stroke-width="1.2"/><path d="M2.5 7.5h9" stroke="#1E1E1E" stroke-width="1.1"/></svg>
<div style="position:absolute;left:944px;top:489.76px;font-family:'Liberation Sans', sans-serif;font-size:18px;line-height:18px;color:#1E1E1E;font-weight:bold;white-space:nowrap;">设计</div>
<div style="position:absolute;left:938px;top:511px;width:283px;height:25px;background:#F5F5F5"></div>
<div style="position:absolute;left:1222px;top:511px;width:331px;height:25px;background:#F5F5F5"></div>
<div style="position:absolute;left:943px;top:514.92px;font-family:'Liberation Sans', sans-serif;font-size:19px;line-height:19px;color:#1E1E1E;font-weight:normal;white-space:nowrap;">(Name)</div>
<div style="position:absolute;left:1225px;top:514.92px;font-family:'Liberation Sans', sans-serif;font-size:19px;line-height:19px;color:#1E1E1E;font-weight:bold;white-space:nowrap;">cmbStreamSecurity</div>
<div style="position:absolute;left:938px;top:537px;width:283px;height:25px;background:#F5F5F5"></div>
<div style="position:absolute;left:1222px;top:537px;width:331px;height:25px;background:#F5F5F5"></div>
<div style="position:absolute;left:943px;top:540.92px;font-family:'Liberation Sans', sans-serif;font-size:19px;line-height:19px;color:#1E1E1E;font-weight:normal;white-space:nowrap;">GenerateMember</div>
<div style="position:absolute;left:1225px;top:540.92px;font-family:'Liberation Sans', sans-serif;font-size:19px;line-height:19px;color:#1E1E1E;font-weight:normal;white-space:nowrap;">True</div>
<div style="position:absolute;left:938px;top:563px;width:283px;height:25px;background:#F5F5F5"></div>
<div style="position:absolute;left:1222px;top:563px;width:331px;height:25px;background:#F5F5F5"></div>
<div style="position:absolute;left:943px;top:566.92px;font-family:'Liberation Sans', sans-serif;font-size:19px;line-height:19px;color:#1E1E1E;font-weight:normal;white-space:nowrap;">Locked</div>
<div style="position:absolute;left:1225px;top:566.92px;font-family:'Liberation Sans', sans-serif;font-size:19px;line-height:19px;color:#1E1E1E;font-weight:normal;white-space:nowrap;">False</div>
<div style="position:absolute;left:938px;top:589px;width:283px;height:25px;background:#F5F5F5"></div>
<div style="position:absolute;left:1222px;top:589px;width:331px;height:25px;background:#F5F5F5"></div>
<div style="position:absolute;left:943px;top:592.92px;font-family:'Liberation Sans', sans-serif;font-size:19px;line-height:19px;color:#1E1E1E;font-weight:normal;white-space:nowrap;">Modifiers</div>
<div style="position:absolute;left:1225px;top:592.92px;font-family:'Liberation Sans', sans-serif;font-size:19px;line-height:19px;color:#1E1E1E;font-weight:normal;white-space:nowrap;">Private</div>
<svg style="position:absolute;left:923px;top:620px;" width="14" height="14" viewBox="0 0 14 14"><rect x="0.6" y="0.6" width="12.8" height="12.8" fill="none" stroke="#1E1E1E" stroke-width="1.2"/><path d="M2.5 7.5h9" stroke="#1E1E1E" stroke-width="1.1"/></svg>
<div style="position:absolute;left:944px;top:619.76px;font-family:'Liberation Sans', sans-serif;font-size:18px;line-height:18px;color:#1E1E1E;font-weight:bold;white-space:nowrap;">数据</div>
<div style="position:absolute;left:938px;top:641px;width:283px;height:25px;background:#F5F5F5"></div>
<div style="position:absolute;left:1222px;top:641px;width:331px;height:25px;background:#F5F5F5"></div>
<svg style="position:absolute;left:923px;top:646px;" width="14" height="14" viewBox="0 0 14 14"><rect x="0.6" y="0.6" width="12.8" height="12.8" fill="none" stroke="#1E1E1E" stroke-width="1.2"/><path d="M2 7.5h10M7.5 2v10" stroke="#1E1E1E" stroke-width="1.1"/></svg>
<div style="position:absolute;left:943px;top:644.92px;font-family:'Liberation Sans', sans-serif;font-size:19px;line-height:19px;color:#1E1E1E;font-weight:normal;white-space:nowrap;">(ApplicationSettings)</div>
<div style="position:absolute;left:938px;top:667px;width:283px;height:25px;background:#F5F5F5"></div>
<div style="position:absolute;left:1222px;top:667px;width:331px;height:25px;background:#F5F5F5"></div>
<svg style="position:absolute;left:923px;top:672px;" width="14" height="14" viewBox="0 0 14 14"><rect x="0.6" y="0.6" width="12.8" height="12.8" fill="none" stroke="#1E1E1E" stroke-width="1.2"/><path d="M2 7.5h10M7.5 2v10" stroke="#1E1E1E" stroke-width="1.1"/></svg>
<div style="position:absolute;left:943px;top:670.92px;font-family:'Liberation Sans', sans-serif;font-size:19px;line-height:19px;color:#1E1E1E;font-weight:normal;white-space:nowrap;">(DataBindings)</div>
<div style="position:absolute;left:938px;top:693px;width:283px;height:25px;background:#F5F5F5"></div>
<div style="position:absolute;left:1222px;top:693px;width:331px;height:25px;background:#F5F5F5"></div>
<div style="position:absolute;left:943px;top:696.92px;font-family:'Liberation Sans', sans-serif;font-size:19px;line-height:19px;color:#1E1E1E;font-weight:normal;white-space:nowrap;">DataSource</div>
<div style="position:absolute;left:1225px;top:696.92px;font-family:'Liberation Sans', sans-serif;font-size:19px;line-height:19px;color:#1E1E1E;font-weight:normal;white-space:nowrap;">(无)</div>
<div style="position:absolute;left:938px;top:719px;width:283px;height:25px;background:#F5F5F5"></div>
<div style="position:absolute;left:1222px;top:719px;width:331px;height:25px;background:#F5F5F5"></div>
<div style="position:absolute;left:943px;top:722.92px;font-family:'Liberation Sans', sans-serif;font-size:19px;line-height:19px;color:#1E1E1E;font-weight:normal;white-space:nowrap;">DisplayMember</div>
<div style="position:absolute;left:1225px;top:722.92px;font-family:'Liberation Sans', sans-serif;font-size:19px;line-height:19px;color:#1E1E1E;font-weight:normal;white-space:nowrap;">(无)</div>
<div style="position:absolute;left:938px;top:745px;width:283px;height:25px;background:#3399FF"></div>
<div style="position:absolute;left:1222px;top:745px;width:331px;height:25px;background:#F5F5F5"></div>
<div style="position:absolute;left:943px;top:748.92px;font-family:'Liberation Sans', sans-serif;font-size:19px;line-height:19px;color:#fff;font-weight:normal;white-space:nowrap;">Items</div>
<div style="position:absolute;left:1225px;top:748.92px;font-family:'Liberation Sans', sans-serif;font-size:19px;line-height:19px;color:#1E1E1E;font-weight:bold;white-space:nowrap;">(集合)</div>
<div style="position:absolute;left:938px;top:771px;width:283px;height:25px;background:#F5F5F5"></div>
<div style="position:absolute;left:1222px;top:771px;width:331px;height:25px;background:#F5F5F5"></div>
<div style="position:absolute;left:943px;top:774.92px;font-family:'Liberation Sans', sans-serif;font-size:19px;line-height:19px;color:#1E1E1E;font-weight:normal;white-space:nowrap;">Tag</div>
<div style="position:absolute;left:938px;top:797px;width:283px;height:25px;background:#F5F5F5"></div>
<div style="position:absolute;left:1222px;top:797px;width:331px;height:25px;background:#F5F5F5"></div>
<div style="position:absolute;left:943px;top:800.92px;font-family:'Liberation Sans', sans-serif;font-size:19px;line-height:19px;color:#1E1E1E;font-weight:normal;white-space:nowrap;">ValueMember</div>
<svg style="position:absolute;left:923px;top:828px;" width="14" height="14" viewBox="0 0 14 14"><rect x="0.6" y="0.6" width="12.8" height="12.8" fill="none" stroke="#1E1E1E" stroke-width="1.2"/><path d="M2.5 7.5h9" stroke="#1E1E1E" stroke-width="1.1"/></svg>
<div style="position:absolute;left:944px;top:827.76px;font-family:'Liberation Sans', sans-serif;font-size:18px;line-height:18px;color:#1E1E1E;font-weight:bold;white-space:nowrap;">外观</div>
<div style="position:absolute;left:938px;top:849px;width:283px;height:25px;background:#F5F5F5"></div>
<div style="position:absolute;left:1222px;top:849px;width:331px;height:25px;background:#F5F5F5"></div>
<div style="position:absolute;left:943px;top:852.92px;font-family:'Liberation Sans', sans-serif;font-size:19px;line-height:19px;color:#1E1E1E;font-weight:normal;white-space:nowrap;">BackColor</div>
<div style="position:absolute;left:1223px;top:851px;width:30px;height:22px;background:#fff;border:1px solid #1E1E1E;box-sizing:border-box"></div>
<div style="position:absolute;left:1264px;top:852.92px;font-family:'Liberation Sans', sans-serif;font-size:19px;line-height:19px;color:#1E1E1E;font-weight:normal;white-space:nowrap;">Window</div>
<div style="position:absolute;left:938px;top:875px;width:283px;height:25px;background:#F5F5F5"></div>
<div style="position:absolute;left:1222px;top:875px;width:331px;height:25px;background:#F5F5F5"></div>
<div style="position:absolute;left:943px;top:878.92px;font-family:'Liberation Sans', sans-serif;font-size:19px;line-height:19px;color:#1E1E1E;font-weight:normal;white-space:nowrap;">Cursor</div>
<div style="position:absolute;left:1225px;top:878.92px;font-family:'Liberation Sans', sans-serif;font-size:19px;line-height:19px;color:#1E1E1E;font-weight:normal;white-space:nowrap;">Default</div>
<div style="position:absolute;left:938px;top:901px;width:283px;height:25px;background:#F5F5F5"></div>
<div style="position:absolute;left:1222px;top:901px;width:331px;height:25px;background:#F5F5F5"></div>
<div style="position:absolute;left:943px;top:904.92px;font-family:'Liberation Sans', sans-serif;font-size:19px;line-height:19px;color:#1E1E1E;font-weight:normal;white-space:nowrap;">DropDownStyle</div>
<div style="position:absolute;left:1225px;top:904.92px;font-family:'Liberation Sans', sans-serif;font-size:19px;line-height:19px;color:#1E1E1E;font-weight:bold;white-space:nowrap;">DropDownList</div>
<div style="position:absolute;left:938px;top:927px;width:283px;height:25px;background:#F5F5F5"></div>
<div style="position:absolute;left:1222px;top:927px;width:331px;height:25px;background:#F5F5F5"></div>
<div style="position:absolute;left:943px;top:930.92px;font-family:'Liberation Sans', sans-serif;font-size:19px;line-height:19px;color:#1E1E1E;font-weight:normal;white-space:nowrap;">FlatStyle</div>
<div style="position:absolute;left:1225px;top:930.92px;font-family:'Liberation Sans', sans-serif;font-size:19px;line-height:19px;color:#1E1E1E;font-weight:normal;white-space:nowrap;">Standard</div>
</div>
<div style="position:absolute;left:1527px;top:746px;width:24px;height:23px;background:#F0F0F0;border:1px solid #A0A0A0;box-sizing:border-box"></div>
<svg style="position:absolute;left:1533px;top:758px;" width="12" height="5" viewBox="0 0 12 5"><rect x="0" y="1" width="2.5" height="3" fill="#000"/><rect x="4.5" y="1" width="2.5" height="3" fill="#000"/><rect x="9" y="1" width="2.5" height="3" fill="#000"/></svg>
<div style="position:absolute;left:1502px;top:725px;width:67px;height:63px;border:3px solid #FF0000;border-radius:7px;background:rgba(255,0,0,0.2);box-sizing:border-box"></div>
<div style="position:absolute;left:1585px;top:14px;font-family:'Liberation Sans',sans-serif;font-size:18px;line-height:18px;color:#555;white-space:nowrap;transform-origin:0 0;transform:rotate(90deg)">诊断工具</div>
</body></html>
